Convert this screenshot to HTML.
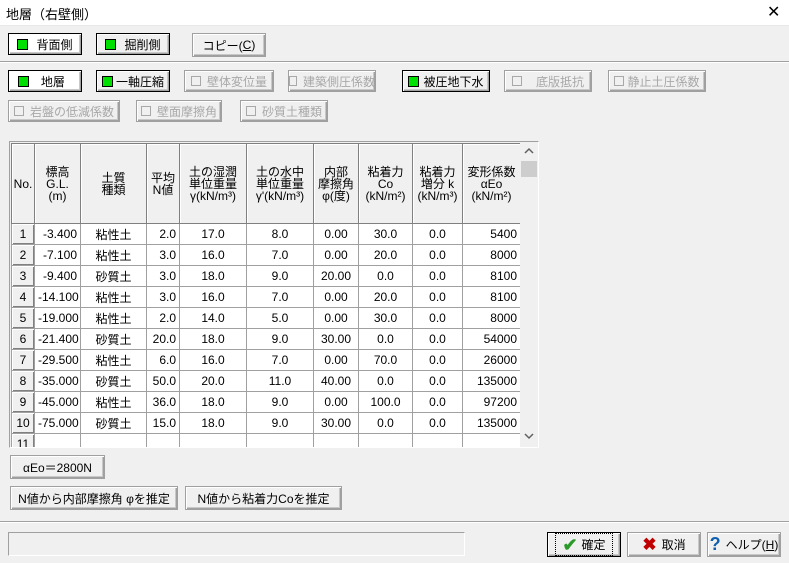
<!DOCTYPE html>
<html><head><meta charset="utf-8"><style>
*{box-sizing:border-box;margin:0;padding:0}
body{width:789px;height:563px;background:#f0f0f0;position:relative;overflow:hidden;font-family:"Liberation Sans","Noto Sans CJK JP",sans-serif;font-size:12px;color:#000}
.a{position:absolute}
.title{left:0;top:0;width:789px;height:25px;background:#fff}
.btn{position:absolute;background:#f0f0f0;border:1px solid #000;box-shadow:inset 1px 1px 0 #fff,inset -1px -1px 0 #a0a0a0,inset -2px -2px 0 #c8c8c8;display:flex;align-items:center;justify-content:center;font-size:12px;white-space:nowrap}
.sel{background:#fff}
.g{display:inline-block;width:11px;height:11px;background:#00e000;border:1px solid #000;margin-right:8px}
.dis{color:#a8a8a8;border-color:#a0a0a0}
.dis .c{display:inline-block;width:10px;height:10px;border:1px solid #a8a8a8;margin-right:6px}
table{position:absolute;left:11px;top:143px;width:509px;border-collapse:collapse;table-layout:fixed;background:#fff}
td{border:1px solid #a0a0a0;height:21px;font-size:12px;padding:0 3px;overflow:hidden;white-space:nowrap}
th{border:1px solid #808080;background:#f0f0f0;font-weight:normal;font-size:12px;line-height:12px;height:80px;overflow:hidden;white-space:nowrap;box-shadow:inset 1px 1px 0 #fff}
td.n{background:#f0f0f0;text-align:center;box-shadow:inset 1px 1px 0 #fff,inset -1px -1px 0 #808080}
.r{text-align:right}.c2{text-align:center}
</style></head><body>
<div class="a title"></div>
<div class="a" style="left:6px;top:4px;font-size:13px">地層（右壁側）</div>
<div class="a" style="left:767px;top:2px;font-size:16px">✕</div>
<div class="a" style="left:0;top:25px;width:789px;height:1px;background:#e8e8e8"></div>

<div class="btn sel" style="left:8px;top:33px;width:74px;height:22px"><span class="g"></span>背面側</div>
<div class="btn" style="left:96px;top:33px;width:74px;height:22px"><span class="g"></span>掘削側</div>
<div class="btn" style="left:192px;top:33px;width:74px;height:24px;border-color:#a0a0a0">コピー(<u>C</u>)</div>
<div class="a" style="left:0;top:61px;width:789px;height:1px;background:#a0a0a0"></div>
<div class="a" style="left:0;top:62px;width:789px;height:1px;background:#fff"></div>

<div class="btn sel" style="left:8px;top:70px;width:74px;height:22px"><span class="g"></span>&nbsp;地層&nbsp;&nbsp;</div>
<div class="btn" style="left:96px;top:70px;width:74px;height:22px"><span class="g" style="margin-right:3px"></span>一軸圧縮</div>
<div class="btn dis" style="left:184px;top:70px;width:90px;height:22px"><span class="c"></span>壁体変位量</div>
<div class="btn dis" style="left:288px;top:70px;width:88px;height:22px"><span class="c"></span>建築側圧係数</div>
<div class="btn" style="left:402px;top:70px;width:88px;height:22px"><span class="g" style="margin-right:4px"></span>被圧地下水</div>
<div class="btn dis" style="left:504px;top:70px;width:88px;height:22px"><span class="c" style="margin-right:14px"></span>底版抵抗</div>
<div class="btn dis" style="left:608px;top:70px;width:98px;height:22px"><span class="c" style="margin-right:3px"></span>静止土圧係数</div>
<div class="btn dis" style="left:8px;top:100px;width:112px;height:22px"><span class="c"></span>岩盤の低減係数</div>
<div class="btn dis" style="left:136px;top:100px;width:86px;height:22px"><span class="c"></span>壁面摩擦角</div>
<div class="btn dis" style="left:240px;top:100px;width:88px;height:22px"><span class="c"></span>砂質土種類</div>

<div class="a" style="left:9px;top:141px;width:530px;height:307px;border:1px solid #a0a0a0;border-right-color:#fff;border-bottom-color:#fff;background:#f0f0f0;overflow:hidden">
</div>
<div class="a" style="left:11px;top:143px;width:509px;height:304px;overflow:hidden">
<table style="left:0;top:0">
<colgroup><col style="width:23px"><col style="width:46px"><col style="width:66px"><col style="width:33px"><col style="width:67px"><col style="width:67px"><col style="width:45px"><col style="width:54px"><col style="width:50px"><col style="width:58px"></colgroup>
<tr><th>No.</th><th>標高<br>G.L.<br>(m)</th><th>土質<br>種類</th><th>平均<br>N値</th><th>土の湿潤<br>単位重量<br>γ(kN/m³)</th><th>土の水中<br>単位重量<br>γ'(kN/m³)</th><th>内部<br>摩擦角<br>φ(度)</th><th>粘着力<br>Co<br>(kN/m²)</th><th>粘着力<br>増分 k<br>(kN/m³)</th><th>変形係数<br>αEo<br>(kN/m²)</th></tr>
<tr><td class="n">1</td><td class="r">-3.400</td><td class="c2">粘性土</td><td class="r">2.0</td><td class="c2">17.0</td><td class="c2">8.0</td><td class="c2">0.00</td><td class="c2">30.0</td><td class="c2">0.0</td><td class="r">5400</td></tr>
<tr><td class="n">2</td><td class="r">-7.100</td><td class="c2">粘性土</td><td class="r">3.0</td><td class="c2">16.0</td><td class="c2">7.0</td><td class="c2">0.00</td><td class="c2">20.0</td><td class="c2">0.0</td><td class="r">8000</td></tr>
<tr><td class="n">3</td><td class="r">-9.400</td><td class="c2">砂質土</td><td class="r">3.0</td><td class="c2">18.0</td><td class="c2">9.0</td><td class="c2">20.00</td><td class="c2">0.0</td><td class="c2">0.0</td><td class="r">8100</td></tr>
<tr><td class="n">4</td><td class="r">-14.100</td><td class="c2">粘性土</td><td class="r">3.0</td><td class="c2">16.0</td><td class="c2">7.0</td><td class="c2">0.00</td><td class="c2">20.0</td><td class="c2">0.0</td><td class="r">8100</td></tr>
<tr><td class="n">5</td><td class="r">-19.000</td><td class="c2">粘性土</td><td class="r">2.0</td><td class="c2">14.0</td><td class="c2">5.0</td><td class="c2">0.00</td><td class="c2">30.0</td><td class="c2">0.0</td><td class="r">8000</td></tr>
<tr><td class="n">6</td><td class="r">-21.400</td><td class="c2">砂質土</td><td class="r">20.0</td><td class="c2">18.0</td><td class="c2">9.0</td><td class="c2">30.00</td><td class="c2">0.0</td><td class="c2">0.0</td><td class="r">54000</td></tr>
<tr><td class="n">7</td><td class="r">-29.500</td><td class="c2">粘性土</td><td class="r">6.0</td><td class="c2">16.0</td><td class="c2">7.0</td><td class="c2">0.00</td><td class="c2">70.0</td><td class="c2">0.0</td><td class="r">26000</td></tr>
<tr><td class="n">8</td><td class="r">-35.000</td><td class="c2">砂質土</td><td class="r">50.0</td><td class="c2">20.0</td><td class="c2">11.0</td><td class="c2">40.00</td><td class="c2">0.0</td><td class="c2">0.0</td><td class="r">135000</td></tr>
<tr><td class="n">9</td><td class="r">-45.000</td><td class="c2">粘性土</td><td class="r">36.0</td><td class="c2">18.0</td><td class="c2">9.0</td><td class="c2">0.00</td><td class="c2">100.0</td><td class="c2">0.0</td><td class="r">97200</td></tr>
<tr><td class="n">10</td><td class="r">-75.000</td><td class="c2">砂質土</td><td class="r">15.0</td><td class="c2">18.0</td><td class="c2">9.0</td><td class="c2">30.00</td><td class="c2">0.0</td><td class="c2">0.0</td><td class="r">135000</td></tr>
<tr><td class="n">11</td><td></td><td></td><td></td><td></td><td></td><td></td><td></td><td></td><td></td></tr>
</table>
</div>
<div class="a" style="left:520px;top:143px;width:18px;height:304px;background:#f0f0f0"></div>
<svg class="a" style="left:524px;top:147px" width="10" height="8"><path d="M1 6 L5 2 L9 6" stroke="#606060" stroke-width="1.5" fill="none"/></svg>
<div class="a" style="left:521px;top:161px;width:16px;height:16px;background:#cdcdcd"></div>
<svg class="a" style="left:524px;top:432px" width="10" height="8"><path d="M1 2 L5 6 L9 2" stroke="#606060" stroke-width="1.5" fill="none"/></svg>

<div class="btn" style="left:10px;top:455px;width:95px;height:24px;border-color:#a0a0a0">αEo＝2800N</div>
<div class="btn" style="left:10px;top:486px;width:168px;height:24px;border-color:#a0a0a0">N値から内部摩擦角 φを推定</div>
<div class="btn" style="left:185px;top:486px;width:157px;height:24px;border-color:#a0a0a0">N値から粘着力Coを推定</div>

<div class="a" style="left:0;top:521px;width:789px;height:1px;background:#a0a0a0"></div>
<div class="a" style="left:0;top:522px;width:789px;height:1px;background:#fff"></div>
<div class="a" style="left:8px;top:532px;width:457px;height:24px;border:1px solid #a0a0a0;border-right-color:#fff;border-bottom-color:#fff"></div>

<div class="btn" style="left:547px;top:532px;width:74px;height:25px"><span style="border:1px dotted #000;padding:2px 6px;display:flex;align-items:center"><span style="color:#2a9a2a;font-size:18px;font-weight:bold;margin-right:4px;line-height:14px">✔</span>確定</span></div>
<div class="btn" style="left:627px;top:532px;width:74px;height:25px;border-color:#a0a0a0"><span style="color:#c00000;font-size:17px;font-weight:bold;margin-right:5px">✖</span>取消</div>
<div class="btn" style="left:707px;top:532px;width:74px;height:25px;border-color:#a0a0a0"><span style="color:#1060b0;font-size:18px;font-weight:bold;margin-right:5px">?</span>ヘルプ(<u>H</u>)</div>
</body></html>
